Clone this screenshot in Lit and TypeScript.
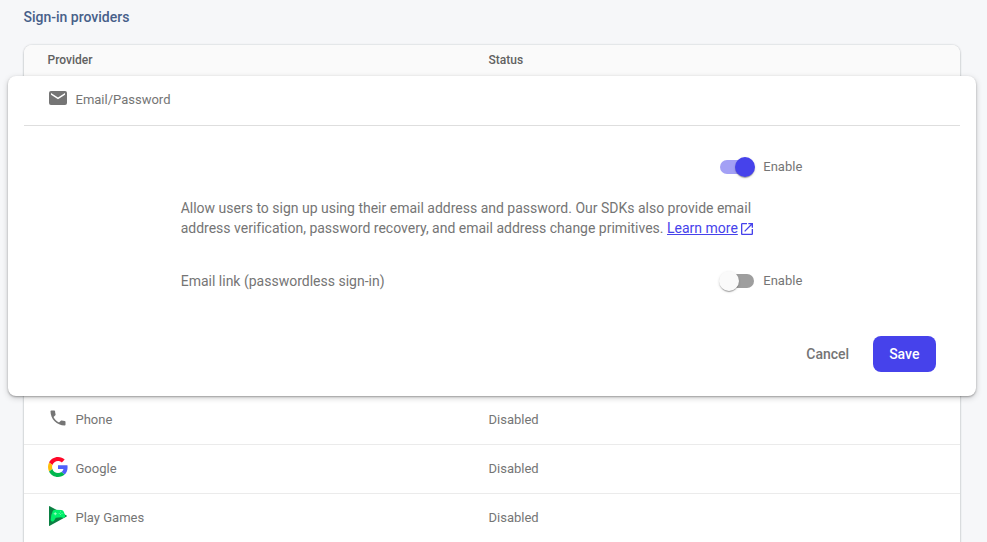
import { LitElement, html, css } from "lit";
import { customElement, property, state } from "lit/decorators.js";
import { classMap } from "lit/directives/class-map.js";

const mailIcon = html`<svg viewBox="0 0 22 22" width="22" height="22" fill="#757575">
  <path d="M4 3h14q2 0 2 2v10q0 2-2 2H4q-2 0-2-2V5q0-2 2-2zM4 5v1.700L11 11.200l7-4.500V5L11 9.500z"/>
</svg>`;

const phoneIcon = html`<svg viewBox="0 0 24 24" width="20" height="20" fill="#757575">
  <path d="M6.620 10.790c1.440 2.830 3.760 5.140 6.590 6.590l2.200-2.200c.27-.27.67-.36 1.020-.24 1.120.37 2.330.57 3.570.57.55 0 1 .45 1 1V20c0 .55-.45 1-1 1-9.390 0-17-7.610-17-17 0-.55.45-1 1-1h3.500c.55 0 1 .45 1 1 0 1.250.2 2.450.57 3.570.11.35.03.74-.25 1.020l-2.200 2.200z"/>
</svg>`;

const googleIcon = html`<svg viewBox="0 0 48 48" width="20" height="20">
  <path fill="#ff0829" d="M24 9.500c3.540 0 6.710 1.220 9.210 3.600l6.850-6.850C35.900 2.380 30.470 0 24 0 14.620 0 6.510 5.380 2.560 13.220l7.980 6.190C12.430 13.720 17.740 9.500 24 9.500z"/>
  <path fill="#5060fa" d="M46.980 24.550c0-1.570-.15-3.090-.38-4.550H24v9.020h12.940c-.58 2.960-2.260 5.480-4.780 7.180l7.730 6c4.510-4.180 7.090-10.360 7.090-17.650z"/>
  <path fill="#ffbd08" d="M10.530 28.590c-.48-1.450-.76-2.990-.76-4.590s.27-3.140.76-4.590l-7.980-6.190C.92 16.460 0 20.120 0 24c0 3.880.92 7.540 2.560 10.780l7.970-6.190z"/>
  <path fill="#00b84f" d="M24 48c6.480 0 11.930-2.130 15.890-5.810l-7.730-6c-2.150 1.450-4.920 2.300-8.160 2.300-6.260 0-11.570-4.220-13.470-9.910l-7.980 6.190C6.510 42.620 14.620 48 24 48z"/>
</svg>`;

const gamesIcon = html`<svg viewBox="0 0 20 20" width="20" height="20">
  <path fill="#0b8043" d="M1 .5Q1-.3 1.800.2L18.600 9.400Q19.300 10 18.600 10.600L1.800 19.800Q1 20.300 1 19.500z"/>
  <path fill="#00f06a" d="M4.800 4.900Q5.600 3.800 7 3.800L13.400 3.900Q15.200 4 15.800 5.800L17.200 9.500Q17.600 11.900 15.700 12L12.900 11.300L7.800 11.800L5.800 14.900Q3.400 16.600 2.700 14Q2.600 9 4.800 4.900z"/>
  <path fill="#9dffc6" d="M6.800 6.200h.9v1.100h1.100v.9H7.700v1.100h-.9V8.200H5.700v-.9h1.100zM12.200 5.500h.8v.8h-.8zM12.200 8.300h.8v.8h-.8zM10.800 6.900h.8v.8h-.8zM13.600 6.900h.8v.8h-.8z"/>
</svg>`;

const openIcon = html`<svg viewBox="0 0 24 24" width="16" height="16" fill="#4642eb">
  <path d="M19 19H5V5h7V3H5c-1.110 0-2 .9-2 2v14c0 1.100.89 2 2 2h14c1.100 0 2-.9 2-2v-7h-2v7zM14 3v2h3.590l-9.830 9.830 1.410 1.410L19 6.410V10h2V3h-7z"/>
</svg>`;

@customElement("slide-toggle")
export class SlideToggle extends LitElement {
  @property({ type: Boolean }) checked = false;

  static styles = css`
    :host { display: flex; align-items: center; height: 24px; cursor: pointer; }
    .bar { display: flex; align-items: center; width: 34px; height: 14px; border-radius: 7px; background: #9e9e9e; }
    .thumb {
      flex: none; width: 20px; height: 20px; border-radius: 50%; margin-left: -1px; background: #fafafa;
      box-shadow: 0 2px 1px -1px rgba(0,0,0,.2), 0 1px 1px rgba(0,0,0,.14), 0 1px 3px rgba(0,0,0,.12);
    }
    .on { background: #a3a0f5; }
    .on .thumb { background: #4642eb; margin-left: 15px; }
    .label { margin: 0 -.3px 0 9.300px; padding-bottom: 1px; font-size: 13px; color: #757575; }
  `;

  render() {
    return html`<div class=${classMap({ bar: true, on: this.checked })}
        @click=${() => (this.checked = !this.checked)}><div class="thumb"></div></div>
      <span class="label">Enable</span>`;
  }
}

@customElement("app-root")
export class AppRoot extends LitElement {
  @state() private rows = [
    { name: "Phone", icon: phoneIcon, status: "Disabled" },
    { name: "Google", icon: googleIcon, status: "Disabled" },
    { name: "Play Games", icon: gamesIcon, status: "Disabled" },
  ];

  static styles = css`
    :host {
      display: block; box-sizing: border-box; height: 542px; overflow: hidden; background: #f6f7f9;
      padding: 7px 27px 0 23.500px; font-family: Roboto, sans-serif; color: #757575; font-size: 13px;
    }
    svg { display: block; }
    h2 { margin: 0 0 18px; font-size: 14px; line-height: 20px; font-weight: 500; color: #476089; }
    .card {
      background: #fff; border-radius: 8px 8px 0 0; height: 520px;
      box-shadow: 0 1px 2px rgba(60,64,67,.3), 0 0 2px rgba(60,64,67,.25);
    }
    .head, .row { display: grid; grid-template-columns: 441px 1fr; padding-left: 24px; align-items: center; }
    .head {
      box-sizing: border-box; height: 31px; padding-bottom: 2px; background: #fafafa; border-radius: 8px 8px 0 0;
      font-size: 12px; font-weight: 500; color: #616161;
    }
    .row { box-sizing: border-box; height: 49px; padding-bottom: 2px; border-bottom: 1px solid #ebebeb; }
    .name { display: flex; align-items: center; }
    .icon { width: 20px; height: 20px; margin: -2px 8px 0 0; display: flex; align-items: center; justify-content: center; }
    .icon svg { flex: none; }
    .panel {
      position: relative; box-sizing: border-box; height: 320px; margin: 0 -16px; padding: 0 16px;
      background: #fff; border-radius: 8px;
      box-shadow: 0 1px 2px rgba(0,0,0,.3), 0 2px 6px rgba(0,0,0,.18);
    }
    .title {
      display: flex; align-items: center; box-sizing: border-box; height: 50px; padding: 0 0 2px 24px;
      border-bottom: 1px solid #dedede;
    }
    .body { padding: 29px 158px 0 157.200px; }
    .line { display: flex; align-items: center; justify-content: space-between; font-size: 14px; }
    p { margin: 19px 0 31px; font-size: 14px; line-height: 20px; letter-spacing: -.003px; }
    .link { color: #4642eb; text-decoration: underline; }
    .open { display: inline-block; vertical-align: -4px; margin-left: 1.300px; }
    .actions { display: flex; justify-content: flex-end; margin: 43px 24px 0 0; }
    button {
      height: 36px; border: 0; padding: 0 16px; border-radius: 8px; background: none;
      font: 500 14px Roboto, sans-serif; color: #757575;
    }
    .save { background: #4642eb; color: #fff; margin-left: 8px; padding: 0 16.600px 0 16px; }
  `;

  render() {
    return html`
      <h2>Sign-in providers</h2>
      <section class="card">
        <div class="head"><span>Provider</span><span>Status</span></div>
        <div class="panel">
          <div class="title"><span class="icon">${mailIcon}</span>Email/Password</div>
          <div class="body">
            <div class="line"><span></span><slide-toggle checked></slide-toggle></div>
            <p>Allow users to sign up using their email address and password. Our SDKs also provide email<br />address verification, password recovery, and email address change primitives. <span class="link">Learn more</span><span class="open">${openIcon}</span></p>
            <div class="line"><span>Email link (passwordless sign-in)</span><slide-toggle></slide-toggle></div>
          </div>
          <div class="actions"><button>Cancel</button><button class="save">Save</button></div>
        </div>
        ${this.rows.map((r) => html`<div class="row">
          <div class="name"><span class="icon">${r.icon}</span>${r.name}</div><span>${r.status}</span>
        </div>`)}
      </section>`;
  }
}
